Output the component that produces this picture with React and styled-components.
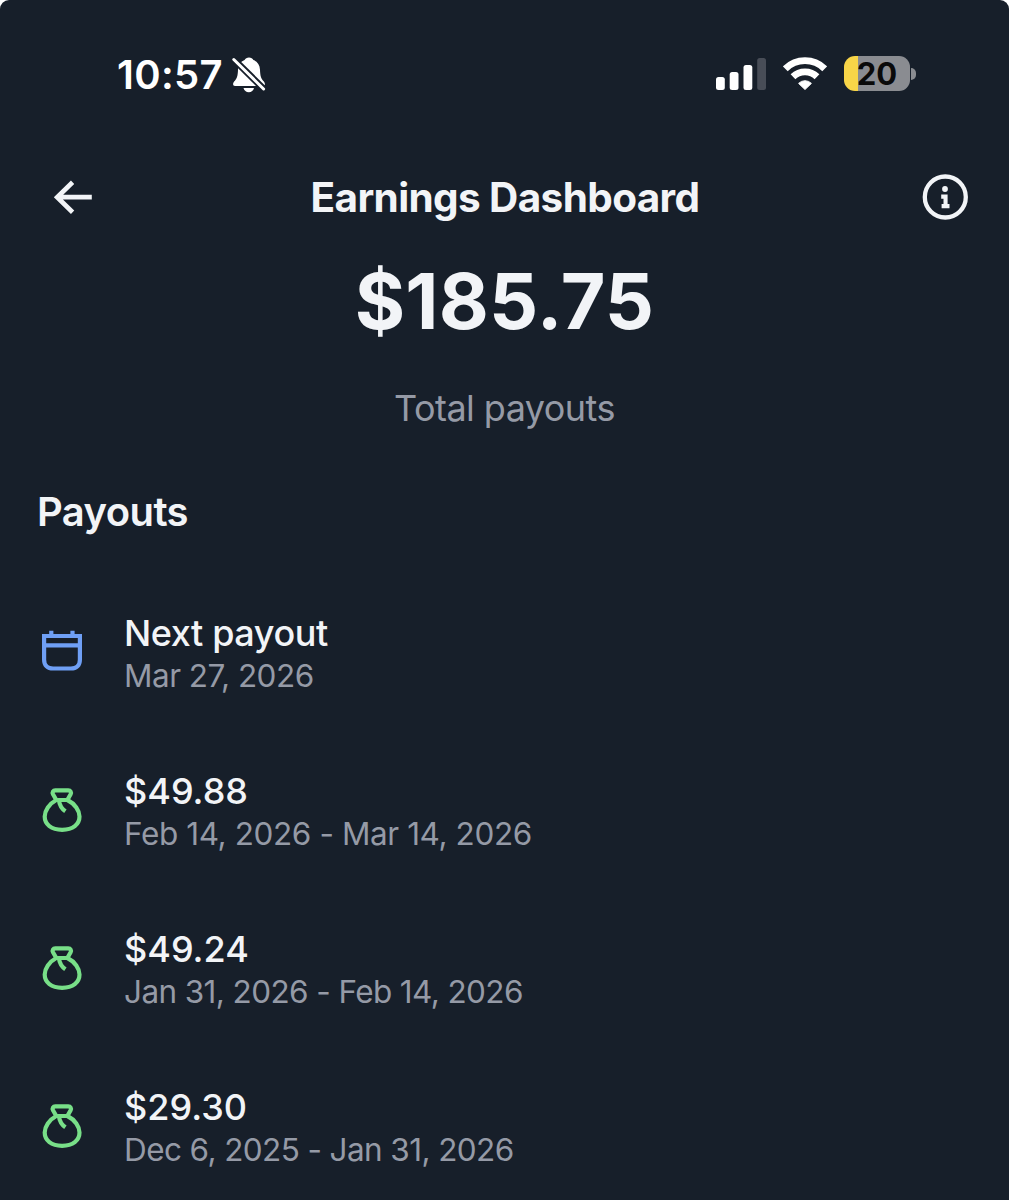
import React from 'react'
import styled, { createGlobalStyle } from 'styled-components'

const GlobalStyle = createGlobalStyle`
body{
    margin:0;
    background:#fff;
    font-family:Inter, "Liberation Sans", sans-serif;
}
`

const Screen = styled.main`
box-sizing:border-box;
width:1009px;
height:1200px;
overflow:hidden;
border-radius:9px 9px 0 0;
background:#171f2a;
color:#f2f4f7;
`

const StatusBar = styled.div`
display:flex;
align-items:center;
justify-content:space-between;
height:150px;
padding:0 93px 0 117px;
`

const StatusGroup = styled.div`
display:flex;
align-items:center;
gap:${({ $gap }) => $gap || "0"};
padding-bottom:${({ $lift }) => $lift || "0"};
`

const Time = styled.span`
width:114px;
color:#fff;
font-size:40px;
font-weight:600;
line-height:48px;
letter-spacing:0.3px;
white-space:nowrap;
`

const Battery = styled.div`
display:flex;
align-items:center;
gap:1px;
margin-bottom:1px;
&::after{
    content:"";
    width:5px;
    height:12px;
    border-radius:0 6px 6px 0;
    background:#8a8c91;
}
`

const BatteryBody = styled.div`
width:66px;
height:35px;
border-radius:11px;
background:linear-gradient(to right, #f8d548 14px, #8a8c91 14px);
color:#0a0a0a;
font-size:31px;
font-weight:700;
line-height:35px;
text-align:center;
`

const Header = styled.header`
display:grid;
grid-template-columns:46px 1fr 54px;
align-items:center;
height:94px;
padding:0 41px 0 50px;
svg{
    display:block;
}
svg:last-child{
    justify-self:end;
}
`

const Title = styled.h1`
margin:0;
padding-top:2px;
font-size:40.5px;
font-weight:700;
line-height:48px;
letter-spacing:-0.63px;
text-align:center;
white-space:nowrap;
`

const Summary = styled.section`
text-align:center;
`

const Amount = styled.div`
font-size:77px;
font-weight:700;
line-height:114px;
letter-spacing:0.2px;
`

const Caption = styled.div`
margin-top:28px;
color:#959aa6;
font-size:36px;
line-height:44px;
letter-spacing:-0.55px;
`

const SectionTitle = styled.h2`
margin:58px 0 0 37px;
font-size:40px;
font-weight:600;
line-height:48px;
letter-spacing:-0.6px;
`

const List = styled.ul`
display:grid;
gap:72px;
margin:75px 0 0;
padding:0 38px;
list-style:none;
`

const Row = styled.li`
display:grid;
grid-template-columns:48px 1fr;
column-gap:38px;
align-items:center;
height:86px;
svg{
    display:block;
}
`

const RowTitle = styled.div`
font-size:36px;
font-weight:500;
line-height:44px;
letter-spacing:${({ $next }) => $next ? "-0.4px" : "0"};
white-space:nowrap;
`

const RowDate = styled.div`
color:#959aa6;
font-size:31.5px;
line-height:42px;
letter-spacing:${({ $tracking }) => $tracking};
white-space:nowrap;
`

function BellOff() {
    return (
        <svg width="36" height="38" viewBox="0 0 36 38">
            <path fill="#fff" d="M18 1.500c2 0 3.700 1 4.400 2.600 4.100 1.500 6.400 5 6.600 9.700.2 5.700 1 8.700 3.100 11 1.200 1.200 1.800 2.200 1.800 3.400 0 1-.7 1.700-1.900 1.700H4c-1.200 0-1.900-.7-1.900-1.700 0-1.200.6-2.200 1.800-3.400 2.100-2.300 2.900-5.300 3.100-11 .2-4.700 2.500-8.200 6.600-9.700.7-1.600 2.400-2.600 4.400-2.600z" />
            <path fill="#fff" d="M12.500 32h10.500c-.5 2.500-2.600 4.300-5.200 4.300s-4.800-1.800-5.300-4.300z" />
            <path stroke="#171f2a" strokeWidth="6.600" d="M0 .6 35.500 35.600" />
            <path stroke="#fff" strokeWidth="3" strokeLinecap="round" d="M2.800 3.500 32.600 33" />
        </svg>
    )
}

function Signal() {
    return (
        <svg width="50" height="34" viewBox="0 0 50 34">
            <rect x="0" y="20" width="8.800" height="13" rx="2.500" fill="#fff" />
            <rect x="13.700" y="15" width="8.800" height="18" rx="2.500" fill="#fff" />
            <rect x="27.500" y="8" width="8.800" height="25" rx="2.500" fill="#fff" />
            <rect x="41.200" y="1" width="8.800" height="32" rx="2.500" fill="#484d57" />
        </svg>
    )
}

function Wifi() {
    return (
        <svg width="44" height="34" viewBox="0 0 44 34">
            <g fill="none" stroke="#fff" strokeWidth="6.800">
                <path d="M2.300 11.800a28 28 0 0 1 39.400 0" />
                <path d="M10 19.700a17.200 17.200 0 0 1 24 0" />
            </g>
            <path fill="#fff" stroke="#fff" strokeWidth="1" strokeLinejoin="round" d="M22 32.500 15.600 26.400a9 9 0 0 1 12.800 0z" />
        </svg>
    )
}

function BackArrow() {
    return (
        <svg width="46" height="46" viewBox="0 0 46 46" fill="none" stroke="#f2f4f7" strokeWidth="4.700">
            <path d="M22.600 8.300 7.200 23.200l15.400 15M7 23.200h34.800" />
        </svg>
    )
}

function Info() {
    return (
        <svg width="46" height="46" viewBox="0 0 46 46">
            <circle cx="23.300" cy="23" r="20.500" fill="none" stroke="#f2f4f7" strokeWidth="4.300" />
            <circle cx="23" cy="15" r="2.900" fill="#f2f4f7" />
            <path fill="#f2f4f7" d="M19.200 20.500h6.400v9.400h1.900v4.300h-7.900v-4.300h1.900v-5.100h-2.300z" />
        </svg>
    )
}

function CalendarIcon() {
    return (
        <svg width="48" height="48" viewBox="0 0 48 48" fill="none" stroke="#6f9ff5" strokeWidth="4.200">
            <path d="M6.100 6h35.800v23.700c0 5.600-3.400 8.800-9 8.800H15.100c-5.600 0-9-3.200-9-8.800zM6 15.400h36M13.300 .8v5M34.500 .8v5" />
        </svg>
    )
}

function MoneyBag() {
    return (
        <svg width="48" height="48" viewBox="0 0 48 48" fill="none" stroke="#78df88" strokeWidth="4.200" strokeLinejoin="round" strokeLinecap="round">
            <path d="M18.300 12 15 6.200c-1-2 .1-3.800 2.300-3.800h13c2.200 0 3.300 1.800 2.300 3.800L29.400 12z" />
            <path d="M18.300 12C11.200 15.800 6.700 22.500 6.700 28.600c0 7.800 6.600 13.200 17.400 13.200s17.400-5.400 17.400-13.200c0-6.100-4.500-12.800-12.100-16.600" />
            <path strokeLinecap="butt" d="M21 12.500c.5 4.500 2.400 8 6.400 10.800" />
        </svg>
    )
}

const payouts = [
    { title: "Next payout", date: "Mar 27, 2026", tracking: "-0.5px", next: true },
    { title: "$49.88", date: "Feb 14, 2026 - Mar 14, 2026", tracking: "-0.4px" },
    { title: "$49.24", date: "Jan 31, 2026 - Feb 14, 2026", tracking: "-0.6px" },
    { title: "$29.30", date: "Dec 6, 2025 - Jan 31, 2026", tracking: "-0.6px" },
]

export default function App() {
    return (
        <Screen>
            <GlobalStyle />
            <StatusBar>
                <StatusGroup>
                    <Time>10:57</Time>
                    <BellOff />
                </StatusGroup>
                <StatusGroup $gap="17px" $lift="2px">
                    <Signal />
                    <Wifi />
                    <Battery>
                        <BatteryBody>20</BatteryBody>
                    </Battery>
                </StatusGroup>
            </StatusBar>
            <Header>
                <BackArrow />
                <Title>Earnings Dashboard</Title>
                <Info />
            </Header>
            <Summary>
                <Amount>$185.75</Amount>
                <Caption>Total payouts</Caption>
            </Summary>
            <SectionTitle>Payouts</SectionTitle>
            <List>
                {payouts.map(({ title, date, tracking, next }) => (
                    <Row key={date}>
                        {next ? <CalendarIcon /> : <MoneyBag />}
                        <div>
                            <RowTitle $next={next}>{title}</RowTitle>
                            <RowDate $tracking={tracking}>{date}</RowDate>
                        </div>
                    </Row>
                ))}
            </List>
        </Screen>
    )
}
